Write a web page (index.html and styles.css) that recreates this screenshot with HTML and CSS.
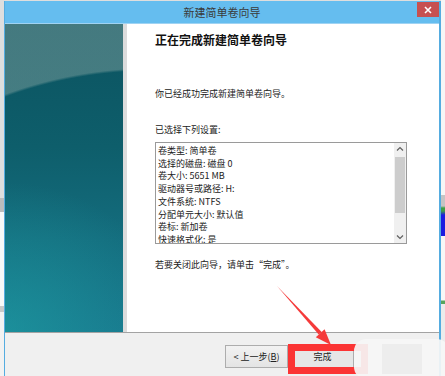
FILE: index.html
```
<!DOCTYPE html>
<html lang="zh-CN">
<head>
  <meta charset="UTF-8" />
  <title>新建简单卷向导</title>
  <link rel="stylesheet" href="styles.css">
</head>
<body>

  <div class="window">
    <div class="titlebar">
      <span></span>
      <span class="title">新建简单卷向导</span>
      <span class="close">
        <svg width="8" height="8" viewBox="0 0 8 8"><path d="M1 1L7 7M7 1L1 7" stroke="#fff" stroke-width="1.6"/></svg>
      </span>
    </div>

    <div class="main">
      <div class="banner"></div>
      <div class="content">
        <h1>正在完成新建简单卷向导</h1>
        <p class="intro">你已经成功完成新建简单卷向导。</p>
        <p class="label">已选择下列设置:</p>

        <div class="listbox">
          <ul class="items">
            <li>卷类型: 简单卷</li>
            <li>选择的磁盘: 磁盘 0</li>
            <li>卷大小: 5651 MB</li>
            <li>驱动器号或路径: H:</li>
            <li>文件系统: NTFS</li>
            <li>分配单元大小: 默认值</li>
            <li>卷标: 新加卷</li>
            <li>快速格式化: 是</li>
          </ul>
          <div class="scrollbar">
            <svg class="arrow-btn" width="12" height="12" viewBox="0 0 12 12"><path d="M3 7.5L6 4.5L9 7.5" fill="none" stroke="#606060" stroke-width="1.2"/></svg>
            <div class="track"><div class="thumb"></div></div>
            <svg class="arrow-btn" width="12" height="12" viewBox="0 0 12 12"><path d="M3 4.5L6 7.5L9 4.5" fill="none" stroke="#606060" stroke-width="1.2"/></svg>
          </div>
        </div>

        <p class="hint">若要关闭此向导，请单击“完成”。</p>
      </div>
    </div>

    <div class="footer">
      <button class="btn">&lt; 上一步(<u>B</u>)</button>
      <button class="btn btn-finish">完成</button>
    </div>
  </div>

  <!-- annotations drawn over the dialog -->
  <div class="highlight"></div>
  <svg class="pointer" width="445" height="376" viewBox="0 0 445 376">
    <polygon points="277,286 321.7,331.9 318.7,334.6" fill="#f53a3a"/>
    <polygon points="331,345 324.6,329.2 315.8,337.3" fill="#f53a3a"/>
  </svg>
  <div class="watermark"><div class="watermark-inner"></div></div>

</body>
</html>
```

FILE: styles.css
```
body {
  margin: 0;
  width: 445px;
  height: 376px;
  overflow: hidden;
  position: relative;
  font-family: "Noto Sans CJK SC", "Noto Sans", sans-serif;
  color: #222;
  background:
    linear-gradient(#f6f6f6 0 195px, #c4c4c4 195px 206px, #3f9d46 208px 211px, #1c1ce0 215px 236px, #f7f7f7 236px 300px, #58a55d 301px 304px, #ececec 304px) right top / 4px 100% no-repeat,
    linear-gradient(#dedede 0 198px, #bcbcbc 198px 212px, #f8f8f8 212px 306px, #c9c9c9 306px 312px, #f2f2f2 312px);
}

.window {
  margin: 1px 0 0 4px;
  width: 437px;
  height: 375px;
  box-sizing: border-box;
  border-left: 1px solid #55ace0;
  border-right: 2px solid #55ace0;
  background: #f0f0f0;
  display: flex;
  flex-direction: column;
}

.titlebar {
  height: 22px;
  background: #65bdef;
  border-bottom: 1px solid #9fd3f3;
  display: grid;
  grid-template-columns: 1fr auto 1fr;
  align-items: start;
}

.title {
  font-size: 11px;
  line-height: 22px;
  color: #3a3a3a;
}

.close {
  justify-self: end;
  margin-top: 1px;
  width: 22px;
  height: 15px;
  background: #c75050;
  display: flex;
  align-items: center;
  justify-content: center;
}

.main {
  height: 308px;
  display: flex;
  border-bottom: 1px solid #a3a3a3;
}

.banner {
  width: 118px;
  border-right: 4px solid #dcdcdc;
  background:
    radial-gradient(ellipse 340px 256px at 150px 300px, transparent 99%, rgba(125, 160, 158, 0.5) 100%),
    radial-gradient(ellipse 170px 150px at 0 100%, rgba(30, 160, 165, 0.6), transparent),
    linear-gradient(180deg, #0b5360 0%, #0e5e6b 40%, #146d7e 70%, #18768c 100%);
}

.content {
  flex: 1;
  background: #fff;
  padding: 8px 0 0 28px;
}

.content h1 {
  margin: 0;
  font-size: 12px;
  line-height: 16px;
  font-weight: bold;
  color: #111;
}

.content p {
  margin: 0;
  font-size: 9px;
  line-height: 12px;
}

.intro {
  padding-top: 40px;
}

.label {
  padding-top: 24px;
}

.listbox {
  margin-top: 6px;
  width: 252px;
  height: 102px;
  box-sizing: border-box;
  border: 1px solid #9a9a9a;
  display: flex;
  overflow: hidden;
}

.items {
  flex: 1;
  list-style: none;
  margin: 0;
  padding: 2px 0 0 2px;
  font-size: 9px;
  line-height: 12.7px;
  overflow: hidden;
}

.scrollbar {
  width: 12px;
  background: #f0f0f0;
  display: flex;
  flex-direction: column;
}

.arrow-btn {
  flex: none;
}

.track {
  flex: 1;
  padding: 2px 1px 0;
}

.thumb {
  height: 56px;
  background: #cdcdcd;
}

.hint {
  padding-top: 15px;
}

.footer {
  flex: 1;
  display: flex;
  align-items: flex-start;
  gap: 3px;
  padding: 12px 0 0 220px;
}

.btn {
  width: 63px;
  height: 23px;
  padding: 0;
  font-family: inherit;
  font-size: 9px;
  color: #222;
  border: 1px solid #adadad;
  background: linear-gradient(#f2f2f2, #e4e4e4);
}

.btn-finish {
  background: #e6e6e6;
}

.highlight {
  position: absolute;
  left: 288px;
  top: 344px;
  width: 80px;
  height: 30px;
  box-sizing: border-box;
  border: 7px solid #fb3434;
}

.pointer {
  position: absolute;
  left: 0;
  top: 0;
}

.watermark {
  position: absolute;
  left: 354px;
  top: 339px;
  width: 95px;
  height: 40px;
  border-radius: 12px;
  background: rgba(246, 246, 246, 0.92);
  display: flex;
  justify-content: center;
  align-items: center;
}

.watermark-inner {
  width: 40px;
  height: 30px;
  background: #ededed;
}
```
